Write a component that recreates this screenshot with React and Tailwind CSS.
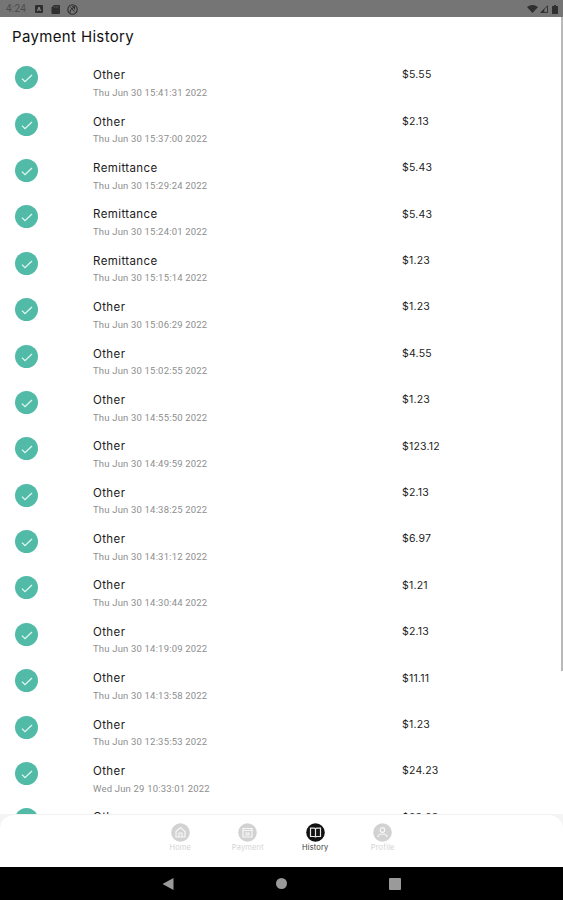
const payments = [
  { type: "Other", date: "Thu Jun 30 15:41:31 2022", amount: "$5.55" },
  { type: "Other", date: "Thu Jun 30 15:37:00 2022", amount: "$2.13" },
  { type: "Remittance", date: "Thu Jun 30 15:29:24 2022", amount: "$5.43" },
  { type: "Remittance", date: "Thu Jun 30 15:24:01 2022", amount: "$5.43" },
  { type: "Remittance", date: "Thu Jun 30 15:15:14 2022", amount: "$1.23" },
  { type: "Other", date: "Thu Jun 30 15:06:29 2022", amount: "$1.23" },
  { type: "Other", date: "Thu Jun 30 15:02:55 2022", amount: "$4.55" },
  { type: "Other", date: "Thu Jun 30 14:55:50 2022", amount: "$1.23" },
  { type: "Other", date: "Thu Jun 30 14:49:59 2022", amount: "$123.12" },
  { type: "Other", date: "Thu Jun 30 14:38:25 2022", amount: "$2.13" },
  { type: "Other", date: "Thu Jun 30 14:31:12 2022", amount: "$6.97" },
  { type: "Other", date: "Thu Jun 30 14:30:44 2022", amount: "$1.21" },
  { type: "Other", date: "Thu Jun 30 14:19:09 2022", amount: "$2.13" },
  { type: "Other", date: "Thu Jun 30 14:13:58 2022", amount: "$11.11" },
  { type: "Other", date: "Thu Jun 30 12:35:53 2022", amount: "$1.23" },
  { type: "Other", date: "Wed Jun 29 10:33:01 2022", amount: "$24.23" },
  { type: "Other", date: "", amount: "$23.23" },
];

const StatusBar = () => (
  <div className="h-[17px] shrink-0 bg-[#757575] flex items-center justify-between pl-[6px] pr-[5px] pt-[1px] text-[#2f2f2f]">
    <div className="flex items-center">
      <span className="w-[29px] font-['Roboto',sans-serif] text-[10px] leading-none tracking-[0.2px] text-[#4c4c4c]">4:24</span>
      <svg className="w-[8px] h-[8px] mr-[8px]" viewBox="0 0 8 8">
        <rect width="8" height="8" rx="1" fill="currentColor" />
        <path d="M2.4 6L4 2l1.6 4M3 4.8h2" stroke="#8a8a8a" strokeWidth="1" fill="none" />
      </svg>
      <svg className="w-[9px] h-[9px] mr-[7px]" viewBox="0 0 9 9">
        <path d="M3 0h5a1 1 0 011 1v7a1 1 0 01-1 1H1.500a1 1 0 01-1-1V2.500z" fill="currentColor" />
        <path d="M3.500 1.200v1.500M5.200 1.200v1.500M6.900 1.200v1.500" stroke="#757575" strokeWidth=".6" />
      </svg>
      <svg className="w-[11px] h-[11px]" viewBox="0 0 11 11" fill="none" stroke="currentColor">
        <circle cx="5.500" cy="5.500" r="4.700" strokeWidth="1.100" />
        <path d="M3.300 8.500V6l4-3M4.800 2.700h2.700v2.800M3.500 3.300l4 4.400" strokeWidth="1" />
      </svg>
    </div>
    <div className="flex items-center">
      <svg className="w-[11px] h-[8px] mr-[2px]" viewBox="0 0 11 8">
        <path d="M0 2Q5.500-2 11 2L5.500 8z" fill="currentColor" />
      </svg>
      <svg className="w-[8px] h-[8px] mr-[4px]" viewBox="0 0 8 8">
        <path d="M.8 7.500h6.700V.8z" fill="none" stroke="currentColor" strokeWidth=".9" />
        <path d="M.8 7.500h3.500V4z" fill="currentColor" />
      </svg>
      <svg className="w-[6px] h-[9px]" viewBox="0 0 6 9">
        <path d="M2 0h2v1h1.500q.5 0 .5.500v7q0 .5-.5.500h-5Q0 9 0 8.500v-7Q0 1 .5 1H2z" fill="currentColor" />
      </svg>
    </div>
  </div>
);

const PaymentRow = ({ payment }) => (
  <div className="h-[46.4px] shrink-0 flex items-start">
    <div className="w-[78px] pt-[2px]">
      <div className="w-[23px] h-[23px] rounded-full bg-[#51bba8] flex items-center justify-center">
        <svg className="w-[12px] h-[9px] mt-[2px]" viewBox="0 0 12 9" fill="none">
          <path d="M1 4.600l3 3L11 1" stroke="#e4f6f2" strokeWidth="1.300" />
        </svg>
      </div>
    </div>
    <div className="w-[309px] pt-[3px]">
      <p className="text-[11.5px] leading-[16px] tracking-[0.4px] text-[#1c1c1c]">{payment.type}</p>
      <p className="mt-[2.6px] font-['Roboto',sans-serif] text-[9.5px] leading-[14px] tracking-[0.18px] text-[#8e8e8e]">{payment.date}</p>
    </div>
    <p className="pt-[3.3px] text-[10.5px] leading-[16px] tracking-[0.2px] text-[#1c1c1c]">{payment.amount}</p>
  </div>
);

const tabs = [
  {
    label: "Home",
    icon: <path d="M5 8.500l4.500-4 4.500 4V14H5zM8 14v-4h3v4" />,
  },
  {
    label: "Payment",
    icon: <path d="M5 5.500h9V14H5zM5 7.500h9M8 10h3v2H8z" />,
  },
  {
    label: "History",
    active: true,
    icon: <path d="M4.500 5.200h3.800q1.200 0 1.200 1 0-1 1.200-1h3.800v8.300h-3.800q-1.200 0-1.200.9 0-.9-1.200-.9H4.500zM9.500 6v8.400" />,
  },
  {
    label: "Profile",
    icon: (
      <>
        <circle cx="9.500" cy="7" r="2.300" />
        <path d="M5 14q.3-3 4.500-3t4.500 3" />
      </>
    ),
  },
];

const TabBar = () => (
  <nav className="h-[53px] shrink-0 bg-[#f4f4f4]">
    <div className="h-full bg-white rounded-t-[14px] border-t border-[#f1f1f1] flex justify-center pt-[8px]">
      {tabs.map((tab) => (
        <div key={tab.label} className="w-[67.5px] flex flex-col items-center">
          <svg className="w-[19px] h-[19px]" viewBox="0 0 19 19" fill="none">
            <circle cx="9.500" cy="9.500" r="9.300" fill={tab.active ? "#111111" : "#d2d2d2"} />
            <g stroke={tab.active ? "#e8e8e8" : "#f7f7f7"} strokeWidth="1.200">{tab.icon}</g>
          </svg>
          <span
            className={`mt-[0.6px] text-[7.5px] leading-[10px] tracking-[0.15px] ${tab.active ? "text-[#3a3a3a]" : "text-[#d4d4d4]"}`}
          >
            {tab.label}
          </span>
        </div>
      ))}
    </div>
  </nav>
);

const SystemNav = () => (
  <div className="h-[33px] shrink-0 bg-black flex items-center justify-center gap-[102px] text-[#9a9a9a]">
    <svg className="w-[12px] h-[12px]" viewBox="0 0 12 12">
      <path d="M11.500 0v12L.5 6z" fill="currentColor" />
    </svg>
    <div className="w-[11px] h-[11px] rounded-full bg-[#9a9a9a]" />
    <div className="w-[12px] h-[12px] rounded-[1px] bg-[#9a9a9a]" />
  </div>
);

export default function App() {
  return (
    <div className="w-[563px] h-[900px] overflow-hidden bg-white flex flex-col font-['Inter',sans-serif]">
      <StatusBar />
      <div className="flex-1 min-h-0 flex justify-between">
        <main className="flex-1 overflow-hidden">
          <h1 className="h-[47.2px] pl-[12px] pt-[10px] text-[15px] leading-[20px] tracking-[0.35px] text-[#111]">
            Payment History
          </h1>
          <div className="pl-[15px] flex flex-col">
            {payments.map((payment, index) => (
              <PaymentRow key={index} payment={payment} />
            ))}
          </div>
        </main>
        <div className="w-[2.5px] h-[654px] bg-[#b9b9b9]" />
      </div>
      <TabBar />
      <SystemNav />
    </div>
  );
}
